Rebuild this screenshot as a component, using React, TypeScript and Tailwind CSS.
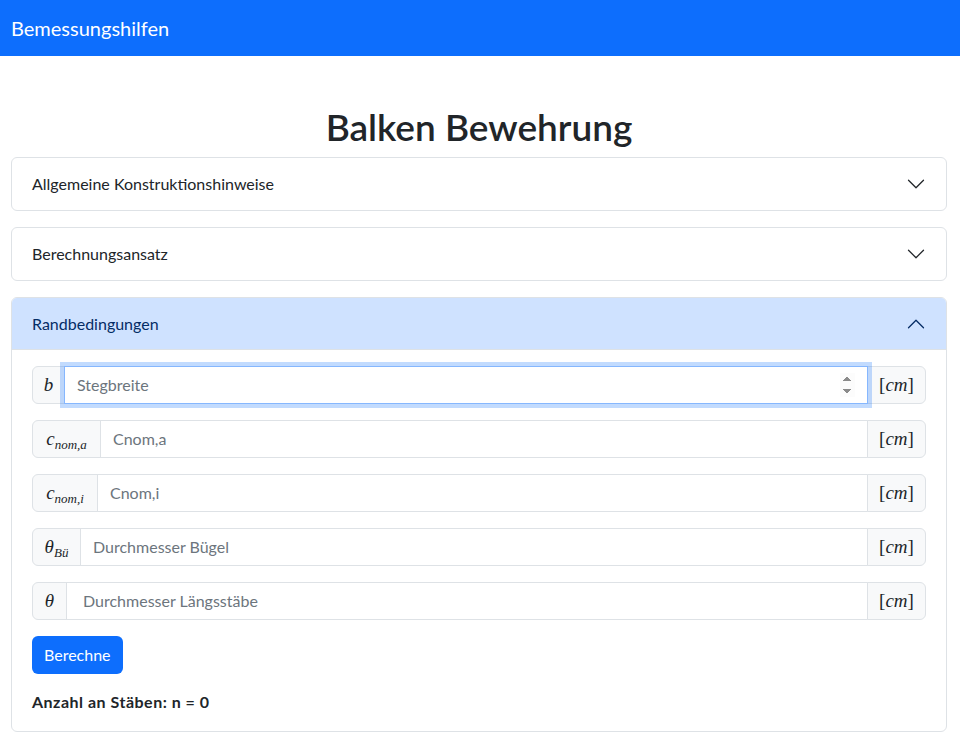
import { useState } from 'react';

function Chevron({ open }: { open?: boolean }) {
  return (
    <svg
      viewBox="0 0 16 16"
      className={open ? 'h-5 w-5 rotate-180' : 'h-5 w-5'}
      fill="none"
      stroke={open ? '#052c65' : '#212529'}
      strokeLinecap="round"
      strokeLinejoin="round"
    >
      <path d="M2 5L8 11L14 5" />
    </svg>
  );
}

function Cm() {
  return (
    <span className="font-['Liberation_Serif',serif] text-[19px]">
      [<i>cm</i>]
    </span>
  );
}

type FieldProps = {
  label: React.ReactNode;
  labelW: string;
  placeholder: string;
  focused?: boolean;
  wide?: boolean;
};

function Field({ label, labelW, placeholder, focused, wide }: FieldProps) {
  const [value, setValue] = useState('');
  return (
    <div className="flex h-[38px] w-full items-stretch">
      <span
        className={`flex shrink-0 items-center justify-center rounded-l-md border border-[#dee2e6] bg-[#f8f9fa] text-[#212529] ${labelW}`}
      >
        {label}
      </span>
      <input
        type="number"
        autoFocus={focused}
        value={value}
        onChange={(e) => setValue(e.target.value)}
        placeholder={placeholder}
        className={
          focused
            ? 'relative z-10 -ml-px min-w-0 flex-1 border border-[#86b7fe] bg-white px-3 text-base text-[#212529] shadow-[0_0_0_4px_rgba(13,110,253,0.25)] outline-none placeholder:text-[#6c757d]'
            : `-ml-px min-w-0 flex-1 border border-[#dee2e6] bg-white pr-3 text-base text-[#212529] outline-none placeholder:text-[#6c757d] [appearance:textfield] [&::-webkit-inner-spin-button]:appearance-none ${wide ? 'pl-4' : 'pl-3'}`
        }
      />
      <span className="-ml-px flex w-[59px] shrink-0 items-center justify-center rounded-r-md border border-[#dee2e6] bg-[#f8f9fa] text-[#212529]">
        <Cm />
      </span>
    </div>
  );
}

function Sub({ base, sub }: { base: string; sub: string }) {
  return (
    <span className="font-['Liberation_Serif',serif] text-[19px] italic">
      {base}
      <span className="relative top-[4px] text-[13px]">{sub}</span>
    </span>
  );
}

export default function App() {
  const [n, setN] = useState(0);

  return (
    <div className="min-h-screen bg-white font-['Lato',sans-serif] text-base leading-normal text-[#212529]">
      <nav className="flex h-14 items-center bg-[#0d6efd] px-[11px]">
        <span className="text-[20px] text-white">Bemessungshilfen</span>
      </nav>

      <div className="pt-[49px] pr-[13px] pl-[11px]">
        <h1 className="mb-2 text-center text-[37px] font-semibold leading-[1.2]">
          Balken Bewehrung
        </h1>

        <div className="mb-4 rounded-md border border-[#dee2e6]">
          <button className="flex h-[52px] w-full items-center justify-between px-5 text-left">
            <span>Allgemeine Konstruktionshinweise</span>
            <Chevron />
          </button>
        </div>

        <div className="mb-4 rounded-md border border-[#dee2e6]">
          <button className="flex h-[52px] w-full items-center justify-between px-5 text-left">
            <span>Berechnungsansatz</span>
            <Chevron />
          </button>
        </div>

        <div className="rounded-md border border-[#dee2e6]">
          <button className="flex h-[52px] w-full items-center justify-between rounded-t-[5px] border-b border-[#dee2e6] bg-[#cfe2ff] px-5 text-left text-[#052c65]">
            <span>Randbedingungen</span>
            <Chevron open />
          </button>
          <div className="flex flex-col gap-4 px-5 pt-4 pb-[17px]">
            <Field
              label={<span className="font-['Liberation_Serif',serif] text-[19px] italic">b</span>}
              labelW="w-[33px]"
              placeholder="Stegbreite"
              focused
            />
            <Field label={<Sub base="c" sub="nom,a" />} labelW="w-[69px]" placeholder="Cnom,a" />
            <Field label={<Sub base="c" sub="nom,i" />} labelW="w-[66px]" placeholder="Cnom,i" />
            <Field label={<Sub base="θ" sub="Bü" />} labelW="w-[49px]" placeholder="Durchmesser Bügel" />
            <Field
              label={<span className="font-['Liberation_Serif',serif] text-[19px] italic">θ</span>}
              labelW="w-[35px]"
              placeholder="Durchmesser Längsstäbe"
              wide
            />
            <div>
              <button
                onClick={() => setN(0)}
                className="h-[38px] rounded-md bg-[#0d6efd] px-3 text-white"
              >
                Berechne
              </button>
            </div>
            <p className="font-bold tracking-[0.5px]">Anzahl an Stäben: n = {n}</p>
          </div>
        </div>
      </div>
    </div>
  );
}
